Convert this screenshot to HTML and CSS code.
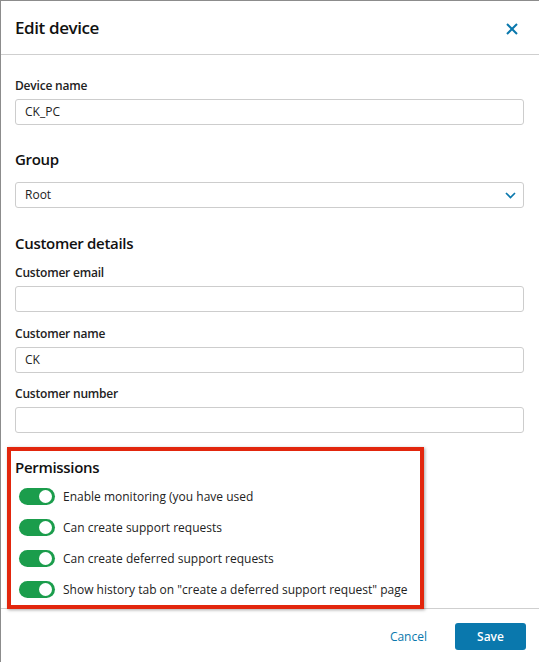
FILE: index.html
```html
<!DOCTYPE html>
<html lang="en">
<head>
<meta charset="utf-8">
<title>Edit device</title>
<link rel="stylesheet" href="styles.css">
</head>
<body>
<div class="modal">
  <header class="modal-header">
    <h1 class="modal-title">Edit device</h1>
    <button class="close" aria-label="Close">
      <svg width="12" height="12" viewBox="0 0 12 12"><path d="M1 1 L11 11 M11 1 L1 11" stroke="#0a78ad" stroke-width="2" fill="none"/></svg>
    </button>
  </header>
  <div class="modal-body">
    <div class="field first">
      <label class="label">Device name</label>
      <div class="input">CK_PC</div>
    </div>
    <h2 class="section-title group-title">Group</h2>
    <div class="input select">
      <span>Root</span>
      <svg width="11" height="7" viewBox="0 0 11 7"><path d="M1 1 L5.5 5.5 L10 1" stroke="#0a78ad" stroke-width="1.7" fill="none"/></svg>
    </div>
    <h2 class="section-title customer-title">Customer details</h2>
    <div class="field email">
      <label class="label">Customer email</label>
      <div class="input"></div>
    </div>
    <div class="field name">
      <label class="label">Customer name</label>
      <div class="input">CK</div>
    </div>
    <div class="field number">
      <label class="label">Customer number</label>
      <div class="input"></div>
    </div>
    <section class="permissions">
      <h2 class="section-title perm-title">Permissions</h2>
      <div class="toggle-row"><span class="toggle"></span><span class="toggle-label">Enable monitoring (you have used</span></div>
      <div class="toggle-row"><span class="toggle"></span><span class="toggle-label">Can create support requests</span></div>
      <div class="toggle-row"><span class="toggle"></span><span class="toggle-label">Can create deferred support requests</span></div>
      <div class="toggle-row"><span class="toggle"></span><span class="toggle-label">Show history tab on "create a deferred support request" page</span></div>
    </section>
  </div>
  <footer class="modal-footer">
    <a class="cancel">Cancel</a>
    <button class="save">Save</button>
  </footer>
</div>
</body>
</html>
```
FILE: styles.css
```css
html, body {
  margin: 0;
  padding: 0;
  background: #fff;
}
body {
  font-family: "Open Sans", "Noto Sans", sans-serif;
  color: #1d1d1d;
}
.modal {
  width: 538px;
  height: 661px;
  border-top: 1px solid #8c8c8c;
  border-left: 1px solid #8c8c8c;
  background: #fff;
  display: flex;
  flex-direction: column;
}
.modal-header {
  height: 53px;
  border-bottom: 1px solid #cfcfcf;
  display: flex;
  align-items: center;
  justify-content: space-between;
  padding: 0 21px 0 14px;
  flex: none;
}
.modal-title {
  margin: 0;
  font-size: 17px;
  font-weight: 600;
  letter-spacing: -0.4px;
  line-height: 24px;
  color: #111;
}
.close {
  border: 0;
  background: none;
  padding: 0;
  display: flex;
  margin-top: 3px;
}
.modal-body {
  padding: 23px 15px 0 14px;
  flex: 1;
}
.field {
  display: flex;
  flex-direction: column;
}
.label {
  font-size: 12px;
  line-height: 16px;
  font-weight: 600;
  letter-spacing: -0.2px;
  color: #222;
  margin-bottom: 5px;
}
.input {
  height: 26px;
  box-sizing: border-box;
  border: 1px solid #cdcdcd;
  border-radius: 3px;
  padding: 0 9px;
  font-size: 12px;
  line-height: 24px;
  color: #222;
  display: flex;
  align-items: center;
}
.select {
  justify-content: space-between;
  padding-right: 7px;
}
.section-title {
  margin: 0;
  font-size: 15px;
  line-height: 22px;
  font-weight: 600;
  letter-spacing: -0.3px;
  color: #111;
}
.group-title { margin-top: 23px; margin-bottom: 12px; }
.customer-title { margin-top: 24px; }
.field.email { margin-top: 11px; }
.field.name { margin-top: 14px; }
.field.number { margin-top: 13px; }
.permissions {
  position: relative;
  z-index: 1;
  margin: 14px 0 -1px -8px;
  width: 405px;
  border: 4px solid #e2260d;
  box-shadow: 1px 1px 3px rgba(0,0,0,0.35);
  padding: 5px 0 7px 4px;
  background: #fff;
}
.perm-title { margin-bottom: 10px; }
.toggle-row {
  display: flex;
  align-items: center;
  height: 17px;
  margin-left: 4px;
  margin-bottom: 14px;
}
.toggle-row:last-child { margin-bottom: 0; }
.toggle {
  width: 36px;
  height: 17px;
  border-radius: 9px;
  background: #1b9d4c;
  position: relative;
  flex: none;
  margin-right: 8px;
}
.toggle::after {
  content: "";
  position: absolute;
  right: 3px;
  top: 2px;
  width: 13px;
  height: 13px;
  border-radius: 50%;
  background: #fff;
}
.toggle-label {
  font-size: 12px;
  line-height: 17px;
  color: #222;
}
.modal-footer {
  flex: none;
  border-top: 1px solid #cfcfcf;
  display: flex;
  justify-content: flex-end;
  align-items: flex-start;
  padding: 14px 13px 0 0;
  box-sizing: border-box;
  height: 54px;
}
.cancel {
  font-size: 12px;
  color: #0a78ad;
  line-height: 27px;
  margin-right: 28px;
}
.save {
  width: 71px;
  height: 27px;
  border: 0;
  border-radius: 3px;
  background: #0a78ad;
  color: #fff;
  font-family: "Open Sans", sans-serif;
  font-size: 12px;
  font-weight: 600;
}
```
